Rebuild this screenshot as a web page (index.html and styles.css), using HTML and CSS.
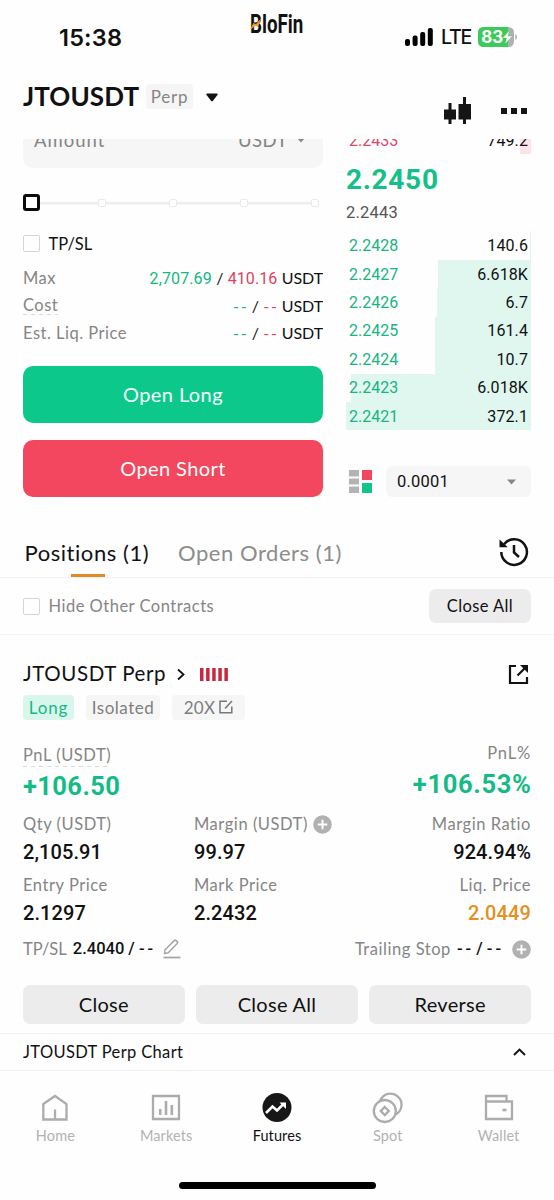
FILE: index.html
```html
<!DOCTYPE html>
<html lang="en">
<head>
<meta charset="utf-8">
<title>JTOUSDT Perp</title>
<link rel="stylesheet" href="styles.css">
</head>
<body>
<div class="screen">
  <header class="status">
    <span class="clock">15:38</span>
    <span class="brand"><span class="brand-text">BloFin</span>
      <svg class="brand-slash" width="12" height="12" viewBox="0 0 12 12"><path d="M1 11 3.500 5.500 6 6.500 10.500 1.500 8 8 5 7.500Z" fill="#f79a2b" stroke="#f79a2b" stroke-width=".8"/></svg></span>
    <span class="signals">
      <svg width="28" height="18" viewBox="0 0 28 18" fill="#000"><rect x="0" y="11" width="5" height="7" rx="2"/><rect x="7.6" y="7.5" width="5" height="10.5" rx="2"/><rect x="15.2" y="4" width="5" height="14" rx="2"/><rect x="22.8" y="0" width="5" height="18" rx="2"/></svg>
      <span class="net">LTE</span>
      <svg class="battery" width="40" height="20" viewBox="0 0 40 20"><defs><clipPath id="cell"><rect width="36" height="20" rx="5.5"/></clipPath></defs><g clip-path="url(#cell)"><rect width="36" height="20" fill="#aeb1b0"/><rect width="30" height="20" fill="#3ccb5a"/></g><path d="M37.300 7v6c1.300-.5 1.700-1.500 1.700-3s-.4-2.500-1.700-3Z" fill="#b4b4b4"/><text x="3.200" y="16" class="pct">83</text><path d="M31.500 3.500 24.500 11h4l-1.500 6 7.500-8h-4.500Z" fill="#fff" stroke="#3ccb5a" stroke-width=".4"/></svg>
    </span>
  </header>

  <div class="symbol-bar">
    <h1 class="symbol">JTOUSDT</h1>
    <span class="perp">Perp</span>
    <svg class="sym-caret" width="12" height="9" viewBox="0 0 12 9"><path d="M1 .5h10q1 0 .6 1.200L7 7.700q-1 1-2 0L.4 1.700Q0 .5 1 .5Z" fill="#111"/></svg>
    <span class="bar-actions">
      <svg width="27" height="28" viewBox="0 0 27 28" fill="#151515"><path d="M4.500 6h3v6.500H12v10H7.500V27h-3v-4.500H0v-10h4.500ZM19 0h3v7h5v15.500h-5V27h-3v-4.500h-4.500V7H19Z"/></svg>
      <svg width="26" height="6" viewBox="0 0 26 6" fill="#151515"><path d="M0 0h6v6H0ZM10 0h6v6h-6ZM20 0h6v6h-6Z"/></svg>
    </span>
  </div>

  <main class="trade">
    <section class="order">
      <div class="amount"><span class="ph">Amount</span><span class="unit">USDT</span><svg width="10" height="6" viewBox="0 0 10 6"><path d="M.5.5h9L5 5.500Z" fill="#8c8c8c"/></svg></div>
      <div class="slider"><i class="handle"></i><i class="tick"></i><i class="tick"></i><i class="tick"></i><i class="tick"></i></div>
      <div class="check-row tpsl"><i class="box"></i><span class="check-label">TP/SL</span></div>
      <div class="info"><span class="k">Max</span><span class="v"><span class="up num">2,707.69</span> / <span class="down num">410.16</span> USDT</span></div>
      <div class="info"><span class="k cost">Cost</span><span class="v"><span class="up dd">--</span> / <span class="down dd">--</span> USDT</span></div>
      <div class="info"><span class="k">Est. Liq. Price</span><span class="v"><span class="up dd">--</span> / <span class="down dd">--</span> USDT</span></div>
      <button class="cta long">Open Long</button>
      <button class="cta short">Open Short</button>
    </section>
    <section class="book num">
      <div class="row ask"><span>2.2433</span><b>749.2</b></div>
      <div class="last">2.2450</div>
      <div class="mark">2.2443</div>
      <div class="row bid" style="--d:1px"><span>2.2428</span><b>140.6</b></div>
      <div class="row bid" style="--d:93px"><span>2.2427</span><b>6.618K</b></div>
      <div class="row bid" style="--d:94px"><span>2.2426</span><b>6.7</b></div>
      <div class="row bid" style="--d:96px"><span>2.2425</span><b>161.4</b></div>
      <div class="row bid" style="--d:96px"><span>2.2424</span><b>10.7</b></div>
      <div class="row bid" style="--d:180px"><span>2.2423</span><b>6.018K</b></div>
      <div class="row bid" style="--d:185px"><span>2.2421</span><b>372.1</b></div>
      <div class="book-tools">
        <svg width="23" height="23" viewBox="0 0 23 23"><path d="M0 0h10v6.500H0ZM0 8.500h10v6H0ZM0 16.500h10V23H0Z" fill="#b3b3b3"/><path d="M13 0h10v10H13Z" fill="#f2465e"/><path d="M13 13h10v10H13Z" fill="#12c48a"/></svg>
        <div class="step"><span>0.0001</span><svg width="9" height="6" viewBox="0 0 9 6"><path d="M0 .5h9L4.500 5.500Z" fill="#858585"/></svg></div>
      </div>
    </section>
  </main>

  <nav class="tabs">
    <span class="tab active">Positions (1)</span>
    <span class="tab orders">Open Orders (1)</span>
    <svg class="history" width="30" height="30" viewBox="0 0 30 30" fill="none" stroke="#111" stroke-width="2.500"><path d="M2.300 15A12.800 12.800 0 1 0 5 7.200"/><path d="M15 8v7.500l5 4.500"/><path d="M.5 2.500v7.800h8.300Z" fill="#111" stroke="none"/></svg>
  </nav>

  <div class="filter">
    <i class="box"></i><span class="filter-label">Hide Other Contracts</span>
    <button class="close-all">Close All</button>
  </div>

  <article class="position">
    <div class="title-row">
      <h2>JTOUSDT Perp</h2>
      <svg width="8" height="13" viewBox="0 0 8 13"><path d="M1 1.500 6.500 6.500 1 11.500" fill="none" stroke="#111" stroke-width="1.800"/></svg>
      <svg class="risk" width="28" height="13" viewBox="0 0 28 13" fill="#c9293f"><path d="M0 0h3.500v13H0ZM6.100 0h3.500v13H6.100ZM12.200 0h3.500v13h-3.500ZM18.300 0h3.500v13h-3.500ZM24.400 0h3.500v13h-3.500Z"/></svg>
      <svg class="share" width="21" height="21" viewBox="0 0 21 21" fill="none" stroke="#111" stroke-width="2.200"><path d="M8 2H2v17h17v-6M9.500 11.500 17 4"/><path d="M12 1h8v8Z" fill="#111" stroke="none"/></svg>
    </div>
    <div class="tags">
      <span class="tag tag-long">Long</span><span class="tag tag-iso">Isolated</span>
      <span class="tag tag-lev">20X <svg width="14" height="14" viewBox="0 0 14 14" fill="none" stroke="#777" stroke-width="1.500"><path d="M8 1.200H1v11.600h11.800V6.500M6 8.500 13 1"/></svg></span>
    </div>
    <div class="pnl">
      <div><span class="label dotted">PnL (USDT)</span><strong>+106.50</strong></div>
      <div class="right"><span class="label">PnL%</span><strong>+106.53%</strong></div>
    </div>
    <div class="stats">
      <div><span class="label">Qty (USDT)</span><b>2,105.91</b></div>
      <div><span class="label">Margin (USDT)<svg class="plus" width="19" height="19" viewBox="0 0 19 19"><circle cx="9.500" cy="9.500" r="9.300" fill="#b1b1b1"/><path d="M9.500 4.700v9.600M4.700 9.500h9.600" stroke="#fff" stroke-width="2"/></svg></span><b>99.97</b></div>
      <div class="right"><span class="label">Margin Ratio</span><b>924.94%</b></div>
      <div><span class="label">Entry Price</span><b>2.1297</b></div>
      <div><span class="label">Mark Price</span><b>2.2432</b></div>
      <div class="right"><span class="label">Liq. Price</span><b class="warn">2.0449</b></div>
    </div>
    <div class="stops">
      <span class="label tight">TP/SL</span><b class="tp">2.4040 / <span class="dd">--</span></b>
      <svg width="18" height="20" viewBox="0 0 18 20" fill="none" stroke="#a6a6a6" stroke-width="1.500"><path d="M1.500 14.500 2 10.800 11.200 1.600q1-.9 2 0l1 1q.9 1 0 2L5.200 13.800Z"/><path d="M.5 18.500h17" stroke-width="1.800"/></svg>
      <span class="label trail">Trailing Stop</span><b class="ts"><span class="dd">--</span> / <span class="dd">--</span></b>
      <svg width="19" height="19" viewBox="0 0 19 19"><circle cx="9.500" cy="9.500" r="9.300" fill="#b1b1b1"/><path d="M9.500 4.700v9.600M4.700 9.500h9.600" stroke="#fff" stroke-width="2"/></svg>
    </div>
    <div class="actions"><button>Close</button><button>Close All</button><button>Reverse</button></div>
  </article>

  <div class="chart-row"><span>JTOUSDT Perp Chart</span><svg width="13" height="8" viewBox="0 0 13 8"><path d="M1 7 6.500 1.500 12 7" fill="none" stroke="#111" stroke-width="1.900"/></svg></div>

  <nav class="bottom">
    <a class="item"><svg width="30" height="32" viewBox="0 0 30 32" fill="none" stroke="#acacac" stroke-width="2.300"><path d="M3.300 12 15 4l11.500 8v15.500H3.300ZM15 17.500v10"/></svg><span>Home</span></a>
    <a class="item"><svg width="30" height="32" viewBox="0 0 30 32" fill="none" stroke="#acacac" stroke-width="2.300"><path d="M2 4h26v23H2Z"/><path d="M9.200 17v6M15 9v14M20.800 13v10" stroke-width="2.600"/></svg><span>Markets</span></a>
    <a class="item on"><svg width="30" height="32" viewBox="0 0 30 32" fill="none"><circle cx="15" cy="15.500" r="14.500" fill="#171717"/><path d="m4 21 6.500-6.500 4.500 4 7-7" stroke="#fff" stroke-width="2.600"/><path d="M17.500 10.500H24V17Z" fill="#fff"/></svg><span>Futures</span></a>
    <a class="item"><svg width="32" height="32" viewBox="0 0 32 32" fill="none" stroke="#acacac" stroke-width="2.300"><path d="M8.200 8.800A11 11 0 1 1 23.200 22.600"/><circle cx="12.800" cy="19" r="11"/><path d="m12.800 15 4 4-4 4-4-4Z"/></svg><span>Spot</span></a>
    <a class="item"><svg width="30" height="32" viewBox="0 0 30 32" fill="none" stroke="#acacac" stroke-width="2.300"><path d="M2 9.500h26V27H2ZM2 9.500V4h20.500v5.500"/><path d="M18.500 18h4" stroke-width="2.600"/></svg><span>Wallet</span></a>
  </nav>
  <div class="home-indicator"></div>
</div>
</body>
</html>
```
FILE: styles.css
```css
* { box-sizing: border-box; }
body { margin: 0; background: #fff; font-family: Lato, "Open Sans", sans-serif; color: #111; }
.screen { width: 554px; height: 1200px; overflow: hidden; display: flex; flex-direction: column; background: #fefefe; }
svg { display: block; flex: none; }
button { border: 0; padding: 0; font-family: inherit; color: #111; }
h1, h2 { margin: 0; }
.num { font-family: Roboto, sans-serif; }

.status { height: 74px; display: grid; grid-template-columns: 250px 53px 1fr; align-items: center; flex: none; }
.clock { padding: 1px 0 0 59px; font: 600 23.500px/28px Inter, sans-serif; letter-spacing: .2px; }
.brand { position: relative; height: 24px; align-self: start; margin-top: 13px; }
.brand-text { display: block; font: 700 25px/24px Roboto, sans-serif; transform: scaleX(.75); transform-origin: 0 50%; white-space: nowrap; }
.brand-slash { position: absolute; left: 0; top: 5px; }
.signals { display: flex; align-items: center; padding-left: 102px; }
.net { font: 500 19.5px/24px Inter, sans-serif; margin-left: 8px; width: 37px; letter-spacing: -1.2px; }
.pct { font: 700 17px Inter, sans-serif; fill: #fff; }

.symbol-bar { height: 65px; display: flex; align-items: flex-start; padding: 10px 27px 0 23px; flex: none; }
.symbol { font-size: 26px; line-height: 24px; font-weight: 700; letter-spacing: .1px; width: 123px; }
.perp { width: 47px; height: 25px; background: #f5f5f5; border-radius: 4px; font-size: 17px; line-height: 25px; text-align: center; color: #858585; letter-spacing: .7px; }
.sym-caret { margin: 9px 0 0 13px; }
.bar-actions { margin: 13px 0 0 auto; display: flex; align-items: center; gap: 30px; }

.trade { height: 386px; display: grid; grid-template-columns: 300px 185px; column-gap: 23px; padding: 0 23px; overflow: hidden; flex: none; }
.order, .book { display: flex; flex-direction: column; min-width: 0; overflow: hidden; }
.amount { flex: none; height: 56px; margin-top: -27px; border-radius: 10px; background: #f6f6f6; display: flex; align-items: center; padding: 0 17px 0 11px; font-size: 18.500px; letter-spacing: 1px; color: #858585; }
.unit { margin: 0 8px 0 auto; letter-spacing: .5px; }

.slider { height: 17px; margin-top: 26px; display: flex; align-items: center; justify-content: space-between; padding-right: 4px; background: linear-gradient(#ededed, #ededed) 17px 8px / 275px 2.500px no-repeat; }
.handle { width: 17px; height: 17px; border: 3px solid #0c0c0c; border-radius: 3px; background: #fff; margin-right: -5px; }
.tick { width: 8px; height: 8px; border: 1.500px solid #e9e9e9; border-radius: 2px; background: #fff; }
.box { width: 17px; height: 17px; border: 1.500px solid #d5d5d5; border-radius: 2px; flex: none; }
.check-row { display: flex; align-items: center; }
.tpsl { height: 20px; margin: 22px 0 11px; gap: 8.500px; font-size: 16.500px; }
.check-label { padding-top: 1px; }
.info { height: 27.500px; display: flex; justify-content: space-between; align-items: center; font-size: 16.500px; flex: none; }
.k { color: #858585; letter-spacing: .5px; }
.v { font-size: 16px; letter-spacing: -.1px; word-spacing: .4px; }
.v .num { letter-spacing: .1px; }
.dd { letter-spacing: 1.800px; margin-right: -1.300px; }
.cost, .dotted { background: repeating-linear-gradient(90deg, #d4dcda 0 4px, transparent 4px 8px) 0 100% / 100% 1px no-repeat; }
.up { color: #12b981; }
.down { color: #dc4260; }
.cta { height: 57px; border-radius: 10px; color: #f4fffb; font-size: 20px; flex: none; letter-spacing: .4px; }
.long { background: #0cc98b; margin-top: 19px; }
.short { background: #f2475f; margin-top: 17px; }

.row { height: 28.430px; display: flex; align-items: center; justify-content: space-between; padding: 0 3px; font-size: 16px; flex: none; }
.row b { font-weight: 400; letter-spacing: .1px; }
.bid { color: #18b481; background: linear-gradient(#e0f7ef, #e0f7ef) 100% 0 / var(--d) 100% no-repeat; }
.bid b, .ask b { color: #111; }
.ask { color: #d94768; margin-top: -13px; background: linear-gradient(#fbe3e8, #fbe3e8) 100% 0 / 11px 100% no-repeat; }
.last { font-size: 28px; line-height: 34px; font-weight: 700; color: #12c088; margin-top: 9px; flex: none; letter-spacing: .7px; }
.mark { font-size: 16.500px; line-height: 24px; color: #555; margin: 4px 0 6px; flex: none; letter-spacing: .2px; }
.book-tools { display: flex; align-items: center; margin-top: 36px; padding-left: 3px; gap: 14px; }
.step { flex: 1; height: 31px; background: #f6f6f6; border-radius: 6px; display: flex; align-items: center; justify-content: space-between; padding: 0 15px 0 11px; font-size: 16.500px; letter-spacing: .2px; }

.tabs { height: 53px; border-bottom: 1.500px solid #f2f2f2; display: flex; align-items: center; padding: 2px 25px 0; flex: none; font-size: 22px; letter-spacing: .55px; }
.tab { color: #8c8c8c; white-space: nowrap; }
.active { color: #111; position: relative; width: 153.500px; margin-left: -.5px; }
.active::after { content: ""; position: absolute; left: 46px; bottom: -11px; width: 34px; height: 3px; background: #e08a22; }
.history { margin-left: auto; }

.filter { height: 57px; border-bottom: 1.500px solid #f3f3f3; display: flex; align-items: center; padding: 0 23px; gap: 8.500px; flex: none; }
.filter-label { color: #858585; font-size: 16.500px; letter-spacing: .5px; }
.close-all { margin-left: auto; width: 102px; height: 34px; border-radius: 7px; background: #ececec; font-size: 16.500px; letter-spacing: .4px; }

.position { height: 398px; padding: 27px 23px 0; flex: none; }
.title-row { height: 24px; display: flex; align-items: center; }
h2 { font-weight: 400; font-size: 20.500px; line-height: 22px; width: 154px; white-space: nowrap; letter-spacing: .6px; padding-bottom: 2px; }
.risk { margin-left: 15px; }
.share { margin-left: auto; margin-right: 2px; }
.tags { height: 25px; margin-top: 9px; display: flex; gap: 12px; }
.tag { height: 25px; border-radius: 4px; background: #f6f6f6; color: #7e7e7e; font-size: 17px; display: flex; align-items: center; justify-content: center; gap: 6px; letter-spacing: .5px; padding-bottom: 1px; }
.tag-long { width: 51px; background: #d9f6ec; color: #16b984; letter-spacing: .9px; }
.tag-iso { width: 74px; }
.tag-lev { width: 73px; letter-spacing: .2px; gap: 4px; }
.label { color: #858585; font-size: 16.500px; line-height: 24px; letter-spacing: .55px; }
.tight { letter-spacing: 0; }
.right { text-align: right; }
.pnl { display: flex; justify-content: space-between; margin-top: 23px; height: 68px; }
.pnl .label { display: block; width: max-content; }
.pnl .right .label { margin: -2px 0 0 auto; letter-spacing: .8px; }
.pnl strong { display: block; font: 700 25.500px/34px Roboto, sans-serif; color: #14bb86; letter-spacing: .4px; margin-top: 2px; }
.pnl .right strong { letter-spacing: .7px; margin-right: -.7px; }
.stats { display: grid; grid-template-columns: 171px 1fr 1fr; row-gap: 5px; }
.stats > div { height: 56px; }
.stats .label { display: flex; align-items: center; height: 26px; gap: 5px; }
.stats .right .label { justify-content: flex-end; }
.stats b { display: block; font: 500 20px/31px Roboto, sans-serif; letter-spacing: .1px; }
.stats .warn { color: #e39022; }
.stops { display: flex; align-items: center; height: 24px; margin-top: 9px; white-space: nowrap; }
.stops b { font: 500 16.500px/24px Roboto, sans-serif; }
.stops .dd { letter-spacing: 3px; margin-right: -2px; }
.tp { margin: 0 9px 0 6px; }
.trail { margin-left: auto; }
.ts { margin: 0 10px 0 6px; }
.actions { display: grid; grid-template-columns: repeat(3, 1fr); gap: 11.500px; margin-top: 24px; }
.actions button { height: 39px; border-radius: 7px; background: #ececec; font-size: 20px; letter-spacing: .3px; padding-bottom: 2px; }

.chart-row { height: 38px; border-top: 1.500px solid #f2f2f2; border-bottom: 1.500px solid #eee; display: flex; align-items: center; justify-content: space-between; padding: 0 28px 0 23px; font-size: 16.500px; letter-spacing: .35px; flex: none; }
.bottom { display: grid; grid-template-columns: repeat(5, 1fr); padding-top: 21px; height: 111px; flex: none; }
.item { display: flex; flex-direction: column; align-items: center; font-size: 14.500px; line-height: 18px; color: #b2b2b2; gap: 3px; letter-spacing: .1px; }
.item.on { color: #111; }
.home-indicator { width: 197px; height: 7px; border-radius: 4px; background: #000; margin: 0 auto; flex: none; }
```
